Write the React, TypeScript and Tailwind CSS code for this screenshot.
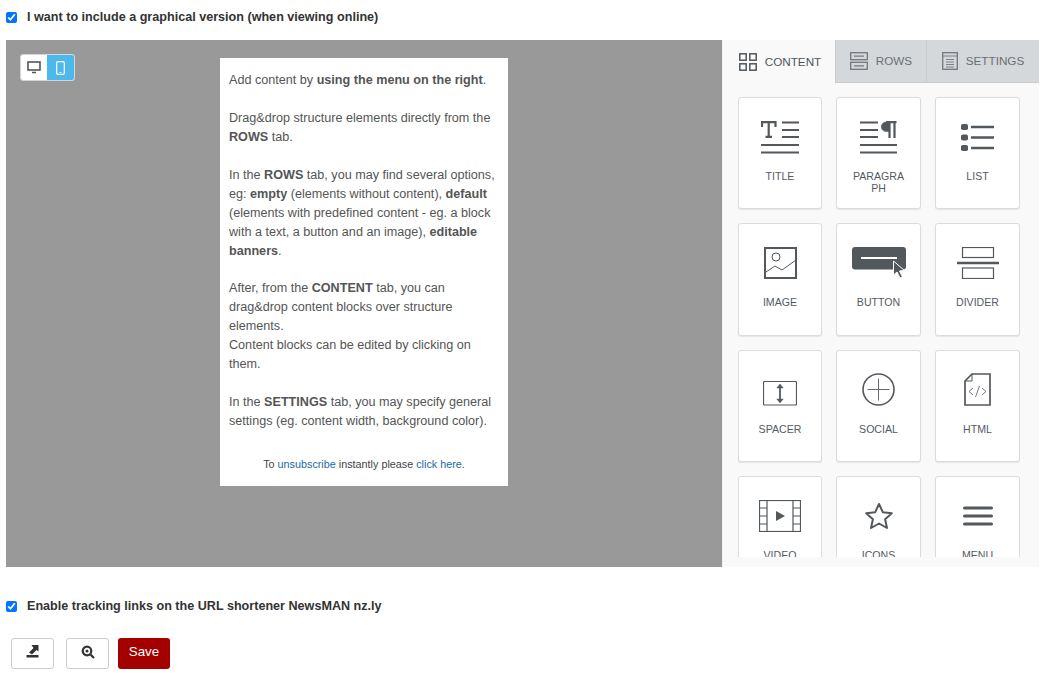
import { ReactNode } from 'react';

const ink = '#53585d';

function GridIcon() {
  return (
    <svg width="18" height="18" viewBox="0 0 18 18" fill="none" stroke={ink} strokeWidth="1.5">
      <rect x="0.8" y="0.8" width="6.4" height="6.4" />
      <rect x="10.800" y="0.8" width="6.4" height="6.4" />
      <rect x="0.8" y="10.800" width="6.4" height="6.4" />
      <rect x="10.800" y="10.800" width="6.4" height="6.4" />
    </svg>
  );
}

function RowsIcon() {
  return (
    <svg width="18" height="18" viewBox="0 0 18 18" fill="none" stroke={ink} strokeWidth="1.3" opacity="0.75">
      <rect x="0.7" y="0.7" width="16.600" height="7" />
      <rect x="0.7" y="10.300" width="16.600" height="7" />
      <path d="M4 4.200h10M4 13.800h10" />
    </svg>
  );
}

function SettingsIcon() {
  return (
    <svg width="16" height="18" viewBox="0 0 16 18" fill="none" stroke={ink} strokeWidth="1.3" opacity="0.75">
      <rect x="0.7" y="0.7" width="14.600" height="16.600" />
      <path d="M0.700 4h14.600M4 7.500h8M4 10h8M4 12.500h8M4 15h8" strokeWidth="0.9" />
    </svg>
  );
}

const icons: Record<string, ReactNode> = {
  TITLE: (
    <svg width="38" height="33" viewBox="0 0 38 33" fill="none" stroke={ink}>
      <path d="M1 6V1.200h13.500V6M7.700 1.200V15.500M4.500 15.800h6.500" strokeWidth="2.200" />
      <path d="M21 1.500h17M21 9h17M21 16h17M0 24h38M0 31.500h38" strokeWidth="2" />
    </svg>
  ),
  PARAGRAPH: (
    <svg width="37" height="33" viewBox="0 0 37 33" fill="none" stroke={ink}>
      <path d="M0 1.500h18M0 9h18M0 16h18M0 24h37M0 31.500h37" strokeWidth="2" />
      <path d="M29 1h-3a4.700 4.700 0 0 0 0 9.500h3z" fill={ink} strokeWidth="0.5" />
      <path d="M29.500 1v16M34.500 1v16M26 1.200h10.500" strokeWidth="2.200" />
    </svg>
  ),
  LIST: (
    <svg width="33" height="27" viewBox="0 0 33 27" fill="none" stroke={ink}>
      <rect x="0" y="0" width="7" height="6" rx="1.800" fill={ink} stroke="none" />
      <rect x="0" y="10.500" width="7" height="6" rx="1.800" fill={ink} stroke="none" />
      <rect x="0" y="21" width="7" height="6" rx="1.800" fill={ink} stroke="none" />
      <path d="M10 3h23M10 13.500h23M10 24h23" strokeWidth="2.400" />
    </svg>
  ),
  IMAGE: (
    <svg width="33" height="32" viewBox="0 0 33 32" fill="none" stroke={ink}>
      <rect x="1" y="1" width="31" height="30" strokeWidth="2" />
      <circle cx="12" cy="10" r="4" strokeWidth="1" />
      <path d="M2 25l9-6 7 4 14-10" strokeWidth="1" />
    </svg>
  ),
  BUTTON: (
    <svg width="54" height="32" viewBox="0 0 54 32" fill="none">
      <rect x="0" y="0" width="54" height="22.500" rx="3" fill={ink} />
      <path d="M9 11h36" stroke="#fff" strokeWidth="2" />
      <path d="M41.500 14l0 14 3.500-3 3 6 2.500-1-3-6 5-.5z" fill={ink} stroke="#fff" strokeWidth="1" />
    </svg>
  ),
  DIVIDER: (
    <svg width="42" height="32" viewBox="0 0 42 32" fill="none" stroke={ink}>
      <rect x="5.500" y="0.500" width="31" height="10" strokeWidth="1.200" />
      <rect x="5.500" y="21" width="31" height="10.500" strokeWidth="1.200" />
      <path d="M0 16h42" strokeWidth="2.400" />
    </svg>
  ),
  SPACER: (
    <svg width="34" height="33" viewBox="0 0 34 33" fill="none" stroke={ink}>
      <rect x="0.500" y="8.500" width="33" height="23.500" rx="1" strokeWidth="1.200" />
      <path d="M17 13v15" strokeWidth="1.800" />
      <path d="M13.800 15l3.200-4 3.200 4zM13.800 26l3.200 4 3.200-4z" fill={ink} strokeWidth="0.5" />
    </svg>
  ),
  SOCIAL: (
    <svg width="33" height="33" viewBox="0 0 33 33" fill="none" stroke={ink}>
      <circle cx="16.500" cy="16.500" r="15.500" strokeWidth="1.600" />
      <path d="M16.500 5.500v22M5.500 16.500h22" strokeWidth="0.900" />
    </svg>
  ),
  HTML: (
    <svg width="27" height="33" viewBox="0 0 27 33" fill="none" stroke={ink}>
      <path d="M8 1h18v31H1V8z" strokeWidth="1.700" />
      <path d="M8 1v7H1" strokeWidth="1" />
      <path d="M9 15l-4 3.500L9 22M18 15l4 3.500-4 3.500M15.500 13l-4 11" strokeWidth="0.800" />
    </svg>
  ),
  VIDEO: (
    <svg width="42" height="32" viewBox="0 0 42 32" fill="none" stroke={ink}>
      <rect x="0.500" y="0.500" width="41" height="31" strokeWidth="1.200" />
      <path d="M8 0.500v31M34 0.500v31M0.500 8h7.500M0.500 16h7.500M0.500 24h7.500M34 8h7.500M34 16h7.500M34 24h7.500" strokeWidth="1.200" />
      <path d="M17 11v10l9-5z" fill={ink} stroke="none" />
    </svg>
  ),
  ICONS: (
    <svg width="30" height="28" viewBox="0 0 30 28" fill="none" stroke={ink}>
      <path d="M15 2l3.800 8.200 9 1-6.700 6 1.900 8.800L15 21.500l-8 4.500 1.900-8.800-6.700-6 9-1z" strokeWidth="2" strokeLinejoin="round" />
    </svg>
  ),
  MENU: (
    <svg width="30" height="22" viewBox="0 0 30 22" fill="none" stroke={ink}>
      <path d="M1.500 3h27M1.500 11h27M1.500 19h27" strokeWidth="3" strokeLinecap="round" />
    </svg>
  ),
};

const blocks = ['TITLE', 'PARAGRAPH', 'LIST', 'IMAGE', 'BUTTON', 'DIVIDER', 'SPACER', 'SOCIAL', 'HTML', 'VIDEO', 'ICONS', 'MENU'];

function Block({ id }: { id: string }) {
  return (
    <div className="w-full h-[112.330px] shrink-0 bg-white border border-[#dcdcdc] rounded-[3px] shadow-[0_1px_1px_rgba(0,0,0,0.08)] flex flex-col items-center">
      <div className="h-[78px] flex items-center justify-center">{icons[id]}</div>
      <div className="w-[62px] mt-[-6px] text-center text-[10.600px] leading-[12px] text-[#555a5f]">
        {id === 'PARAGRAPH' ? (
          <>
            PARAGRA
            <br />
            PH
          </>
        ) : (
          id
        )}
      </div>
    </div>
  );
}

function Tab({ icon, label, active, width }: { icon: ReactNode; label: string; active?: boolean; width: string }) {
  return (
    <div
      className={`${width} h-[43px] flex items-center justify-center gap-[8px] text-[11.700px] ${
        active ? 'bg-[#f9f9f9] text-[#4f5459] pl-[2px]' : 'bg-[#d5d8db] text-[#6a6f74] border-b border-[#c8cbce] border-l border-l-[#c8cbce]'
      }`}
    >
      {icon}
      <span>{label}</span>
    </div>
  );
}

function Check({ children }: { children: ReactNode }) {
  return (
    <label className="flex items-center text-[12.600px] leading-[16px] font-bold text-[#333] ml-[6px]">
      <input type="checkbox" defaultChecked className="w-[11px] h-[11px] m-0 mr-[10px] mt-[1px] accent-[#0075ff]" />
      <span>{children}</span>
    </label>
  );
}

function ToolButton({ children }: { children: ReactNode }) {
  return (
    <button className="w-[43px] h-[31px] flex items-center justify-center bg-white border border-[#ccc] rounded-[3px]">
      {children}
    </button>
  );
}

export default function App() {
  return (
    <div className="w-[1048px] h-[673px] overflow-hidden bg-white font-['Liberation_Sans',Arial,sans-serif]">
      <div className="h-[40px] pt-[9px] flex items-start">
        <Check>I want to include a graphical version (when viewing online)</Check>
      </div>

      <div className="flex ml-[6px] w-[1033px] h-[527px]">
        <div className="relative w-[716px] bg-[#999999] pt-[18px] flex justify-center items-start">
          <div className="absolute left-[14px] top-[14px] w-[55px] h-[27px] flex rounded-[3px] border border-[#d5d5d5] overflow-hidden bg-white">
            <div className="w-[26px] flex items-center justify-center">
              <svg width="14" height="13" viewBox="0 0 14 13" fill="none" stroke="#555">
                <rect x="1" y="1" width="12" height="8" strokeWidth="1.600" />
                <path d="M5 11.500h4" strokeWidth="1.600" />
              </svg>
            </div>
            <div className="flex-1 bg-[#4db8ec] flex items-center justify-center">
              <svg width="9" height="14" viewBox="0 0 9 14" fill="none" stroke="#fff">
                <rect x="0.700" y="0.700" width="7.600" height="12.600" rx="1" strokeWidth="1.200" />
                <path d="M3.500 11.500h2" strokeWidth="1" />
              </svg>
            </div>
          </div>

          <div className="w-[288px] h-[428px] bg-white pt-[13px] px-[9px] text-[12.620px] leading-[18.950px] text-[#555]">
            <p>
              Add content by <b>using the menu on the right</b>.
            </p>
            <br />
            <p>
              Drag&amp;drop structure elements directly from the <b>ROWS</b> tab.
            </p>
            <br />
            <p>
              In the <b>ROWS</b> tab, you may find several options, eg: <b>empty</b> (elements without content),{' '}
              <b>default</b> (elements with predefined content - eg. a block with a text, a button and an image),{' '}
              <b>editable banners</b>.
            </p>
            <br />
            <p>
              After, from the <b>CONTENT</b> tab, you can drag&amp;drop content blocks over structure elements.
              <br />
              Content blocks can be edited by clicking on them.
            </p>
            <br />
            <p>
              In the <b>SETTINGS</b> tab, you may specify general settings (eg. content width, background color).
            </p>
            <p className="mt-[26px] text-center text-[10.800px] leading-[14px] text-[#444]">
              To <span className="text-[#1a6aa5]">unsubscribe</span> instantly please{' '}
              <span className="text-[#1a6aa5]">click here</span>.
            </p>
          </div>
        </div>

        <div className="w-[317px] border-l border-l-[#f0f0f0] bg-[#f9f9f9] flex flex-col">
          <div className="flex shrink-0">
            <Tab width="w-[112px]" active icon={<GridIcon />} label="CONTENT" />
            <Tab width="w-[91px]" icon={<RowsIcon />} label="ROWS" />
            <Tab width="w-[113px]" icon={<SettingsIcon />} label="SETTINGS" />
          </div>
          <div className="h-[474px] overflow-hidden pt-[14px] pl-[15px] pr-[19px]">
            <div className="grid grid-cols-[84px_85px_85px] gap-x-[14px] gap-y-[14px]">
              {blocks.map((id) => (
                <Block key={id} id={id} />
              ))}
            </div>
          </div>
        </div>
      </div>

      <div className="mt-[31px] h-[16px] flex items-center">
        <Check>Enable tracking links on the URL shortener NewsMAN nz.ly</Check>
      </div>

      <div className="mt-[24px] ml-[11px] flex items-center">
        <ToolButton>
          <svg className="mb-[5px]" width="13" height="14" viewBox="0 0 13 14" fill="#333">
            <path d="M3 8.500L7.500 4 5.500 1h7v6.500L10.500 6 6 10.500z" />
            <rect x="0.500" y="11" width="12" height="2.500" />
          </svg>
        </ToolButton>
        <div className="w-[12px]" />
        <ToolButton>
          <svg className="mb-[4px]" width="14" height="14" viewBox="0 0 14 14" fill="none" stroke="#333">
            <circle cx="6" cy="6" r="4.300" strokeWidth="2.200" />
            <path d="M9.500 9.500l3.500 3.500" strokeWidth="2.200" />
            <circle cx="6" cy="6" r="1.500" fill="#333" stroke="none" />
          </svg>
        </ToolButton>
        <button className="ml-[9px] w-[52px] h-[31px] pb-[4px] bg-[#a50000] text-white text-[13.300px] rounded-[3px]">Save</button>
      </div>
    </div>
  );
}
